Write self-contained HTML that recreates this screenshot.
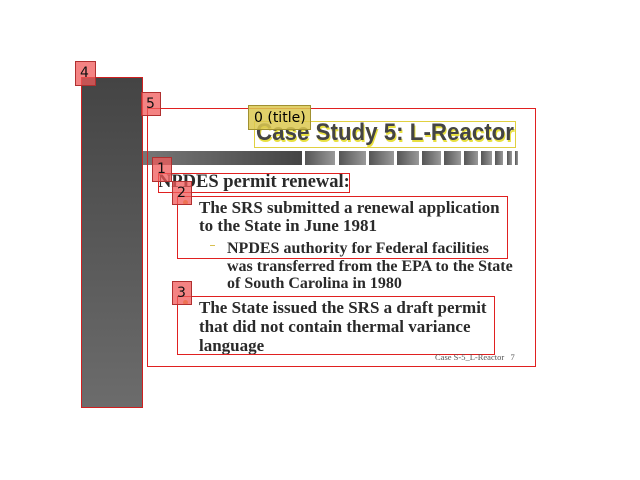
<!DOCTYPE html><html><head><style>
body{margin:0;width:640px;height:480px;background:#fff;position:relative;overflow:hidden;font-family:"Liberation Serif",serif}
.a{position:absolute}
.rb{position:absolute;border:1px solid #e02020;box-sizing:border-box}
.lb{position:absolute;background:rgba(240,90,90,.75);border:1px solid #b03030;box-sizing:border-box;font:14px "DejaVu Sans",sans-serif;color:#111;padding-left:4px;line-height:22px}
.t{position:absolute;font-weight:bold;color:#2a2a2a;font-size:17px;white-space:nowrap}
.seg{position:absolute;top:151px;height:14px;background:linear-gradient(90deg,#555,#999)}
</style></head><body>
<div class="a" style="left:81px;top:77px;width:62px;height:331px;background:linear-gradient(#444,#6c6c6c);border:1px solid #d02020;box-sizing:border-box"></div>
<div class="a" style="left:143px;top:151px;width:159px;height:14px;background:linear-gradient(90deg,#777,#444)"></div>
<div class="seg" style="left:305px;width:30px"></div>
<div class="seg" style="left:339px;width:27px"></div>
<div class="seg" style="left:369px;width:25px"></div>
<div class="seg" style="left:397px;width:22px"></div>
<div class="seg" style="left:422px;width:19px"></div>
<div class="seg" style="left:444px;width:17px"></div>
<div class="seg" style="left:464px;width:14px"></div>
<div class="seg" style="left:481px;width:11px"></div>
<div class="seg" style="left:495px;width:8px"></div>
<div class="seg" style="left:507px;width:5px"></div>
<div class="seg" style="left:515px;width:3px"></div>
<div class="rb" style="left:147px;top:108px;width:389px;height:259px"></div>
<div class="a" style="left:254px;top:121px;width:262px;height:27px;border:1px solid #e0d040;box-sizing:border-box"></div>
<div class="a" style="left:256px;top:119px;font:bold 24px 'Liberation Sans',sans-serif;color:#444;text-shadow:1px 2px 0 #e8e040;white-space:nowrap;transform:scaleX(0.93);transform-origin:left top">Case Study 5: L-Reactor</div>
<div class="a" style="left:248px;top:105px;width:63px;height:25px;background:rgba(220,200,80,.85);border:1px solid #a09030;box-sizing:border-box;font:14px 'DejaVu Sans',sans-serif;padding-left:5px;line-height:24px">0 (title)</div>
<div class="t" style="left:158px;top:172px;font-size:18.5px">NPDES permit renewal:</div>
<div class="rb" style="left:158px;top:173px;width:192px;height:20px"></div>
<div class="a" style="left:183px;top:200px;width:5px;height:5px;border-radius:50%;background:#e8c040"></div>
<div class="t" style="left:199px;top:198px">The SRS submitted a renewal application</div>
<div class="t" style="left:199px;top:216px">to the State in June 1981</div>
<div class="a" style="left:210px;top:245px;width:5px;height:1px;background:#d8c050"></div>
<div class="t" style="left:227px;top:240px;font-size:16px">NPDES authority for Federal facilities</div>
<div class="t" style="left:227px;top:258px;font-size:16px">was transferred from the EPA to the State</div>
<div class="t" style="left:227px;top:275px;font-size:16px">of South Carolina in 1980</div>
<div class="rb" style="left:177px;top:196px;width:331px;height:63px"></div>
<div class="a" style="left:183px;top:300px;width:5px;height:5px;border-radius:50%;background:#e8c040"></div>
<div class="t" style="left:199px;top:298px">The State issued the SRS a draft permit</div>
<div class="t" style="left:199px;top:317px">that did not contain thermal variance</div>
<div class="t" style="left:199px;top:336px">language</div>
<div class="rb" style="left:177px;top:296px;width:318px;height:59px"></div>
<div class="a" style="left:435px;top:352px;font-size:8.5px;color:#555;white-space:nowrap">Case S-5_L-Reactor &nbsp;&nbsp;7</div>
<div class="lb" style="left:75px;top:61px;width:21px;height:25px">4</div>
<div class="lb" style="left:141px;top:92px;width:20px;height:24px">5</div>
<div class="lb" style="left:152px;top:157px;width:20px;height:25px">1</div>
<div class="lb" style="left:172px;top:181px;width:20px;height:24px">2</div>
<div class="lb" style="left:172px;top:281px;width:20px;height:24px">3</div>
</body></html>
